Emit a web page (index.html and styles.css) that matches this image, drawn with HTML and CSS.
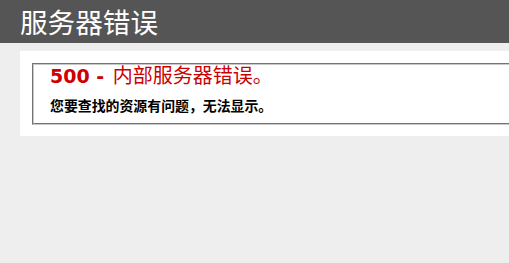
FILE: index.html
```html
<!DOCTYPE html>
<html lang="zh-CN">
<head>
<meta charset="utf-8">
<title>500 - 内部服务器错误。</title>
<link rel="stylesheet" href="styles.css">
</head>
<body>
<div class="header"><h1 class="title">服务器错误</h1></div>
<div class="content">
  <div class="content-container">
    <fieldset class="box">
      <h2 class="code">500 - <span class="code-cjk">内部服务器错误。</span></h2>
      <h3 class="msg">您要查找的资源有问题，无法显示。</h3>
    </fieldset>
  </div>
</div>
</body>
</html>
```

FILE: styles.css
```css
body {
  margin: 0;
  font-size: 11.2px;
  font-family: "DejaVu Sans", Verdana, "Noto Sans CJK SC", sans-serif;
  background: #eeeeee;
}
.header {
  padding: 6px 0 6px 20px;
  background-color: #555555;
  color: #fff;
}
.title {
  font-size: 27.6px;
  line-height: 31px;
  margin: 0;
  color: #fff;
  font-weight: normal;
  font-family: "Noto Sans CJK SC", sans-serif;
}
.content {
  margin: 0 0 0 20px;
}
.content-container {
  background: #fff;
  margin-top: 8px;
  padding: 12px 0 11px 10px;
}
.box {
  padding: 0 15px 10px 16px;
  margin: 0 0 0 2px;
  border: 2px groove #c8c8c8;
  border-right: none;
}
.code {
  font-size: 19px;
  line-height: 22px;
  height: 22px;
  margin: 0;
  color: #cc0000;
  font-family: "DejaVu Sans", "Noto Sans CJK SC", sans-serif;
  font-weight: bold;
}
.code-cjk {
  font-weight: normal;
  font-size: 20px;
  line-height: 20px;
  font-family: "Noto Sans CJK SC", sans-serif;
  margin-left: 2px;
}
.msg {
  font-size: 13.9px;
  line-height: 16px;
  height: 16px;
  margin: 10px 0 0 0;
  color: #000;
  font-family: "Noto Sans CJK SC", sans-serif;
  font-weight: bold;
}
```
